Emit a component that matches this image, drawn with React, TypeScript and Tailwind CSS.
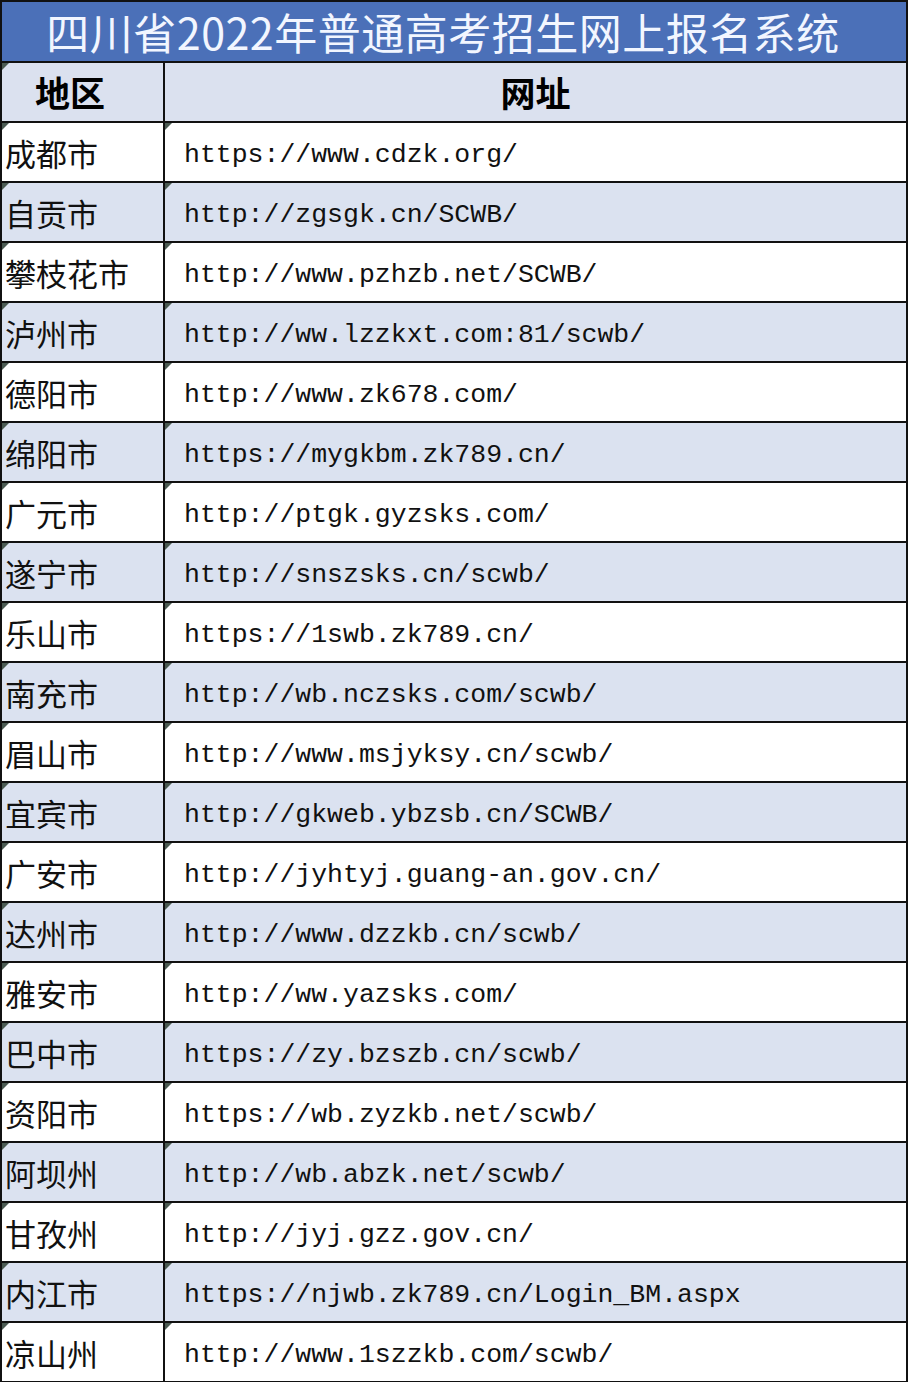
import React from "react";

const rows: [string, string][] = [
  ["成都市", "https://www.cdzk.org/"],
  ["自贡市", "http://zgsgk.cn/SCWB/"],
  ["攀枝花市", "http://www.pzhzb.net/SCWB/"],
  ["泸州市", "http://ww.lzzkxt.com:81/scwb/"],
  ["德阳市", "http://www.zk678.com/"],
  ["绵阳市", "https://mygkbm.zk789.cn/"],
  ["广元市", "http://ptgk.gyzsks.com/"],
  ["遂宁市", "http://snszsks.cn/scwb/"],
  ["乐山市", "https://1swb.zk789.cn/"],
  ["南充市", "http://wb.nczsks.com/scwb/"],
  ["眉山市", "http://www.msjyksy.cn/scwb/"],
  ["宜宾市", "http://gkweb.ybzsb.cn/SCWB/"],
  ["广安市", "http://jyhtyj.guang-an.gov.cn/"],
  ["达州市", "http://www.dzzkb.cn/scwb/"],
  ["雅安市", "http://ww.yazsks.com/"],
  ["巴中市", "https://zy.bzszb.cn/scwb/"],
  ["资阳市", "https://wb.zyzkb.net/scwb/"],
  ["阿坝州", "http://wb.abzk.net/scwb/"],
  ["甘孜州", "http://jyj.gzz.gov.cn/"],
  ["内江市", "https://njwb.zk789.cn/Login_BM.aspx"],
  ["凉山州", "http://www.1szzkb.com/scwb/"],
];

function Tri() {
  return (
    <span className="absolute left-0 top-0 h-0 w-0 border-t-[7px] border-r-[7px] border-t-[#4a5a52] border-r-transparent" />
  );
}

export default function App() {
  return (
    <div className="w-[908px] h-[1382px] bg-white overflow-hidden">
      <div className="border-[2px] border-[#111] border-b-0">
        <div
          className="h-[59px] bg-[#4b70b8] flex items-center justify-center text-[#f2f6ff] text-[43px] leading-none pr-[22px] tracking-[0.5px]"
          style={{ fontFamily: '"Noto Sans CJK SC", sans-serif' }}
        >
          四川省2022年普通高考招生网上报名系统
        </div>
        <div className="flex h-[60px] border-t-[2px] border-[#111] bg-[#dbe1ef]">
          <div
            className="relative w-[163px] shrink-0 border-r-[2px] border-[#111] flex items-center pl-[33px] text-[35px] font-bold text-black"
            style={{ fontFamily: '"Noto Sans CJK SC", sans-serif' }}
          >
            <Tri />
            地区
          </div>
          <div
            className="flex-1 flex items-center justify-center text-[35px] font-bold text-black"
            style={{ fontFamily: '"Noto Sans CJK SC", sans-serif' }}
          >
            网址
          </div>
        </div>
        {rows.map(([region, url], i) => (
          <div
            key={region}
            className={
              "flex h-[60px] border-t-[2px] border-[#111] " +
              (i % 2 === 1 ? "bg-[#dbe2f0]" : "bg-white")
            }
          >
            <div
              className="relative w-[163px] shrink-0 border-r-[2px] border-[#111] flex items-center pl-[3px] pt-[3px] text-[31px] text-[#111] whitespace-nowrap"
              style={{ fontFamily: '"Noto Sans CJK SC", sans-serif' }}
            >
              <Tri />
              {region}
            </div>
            <div
              className="relative flex-1 flex items-center pl-[19px] pt-[7px] text-[26.5px] text-[#111] whitespace-nowrap"
              style={{ fontFamily: '"Liberation Mono", monospace' }}
            >
              <Tri />
              {url}
            </div>
          </div>
        ))}
        <div className="border-t-[2px] border-[#111]" />
      </div>
    </div>
  );
}
